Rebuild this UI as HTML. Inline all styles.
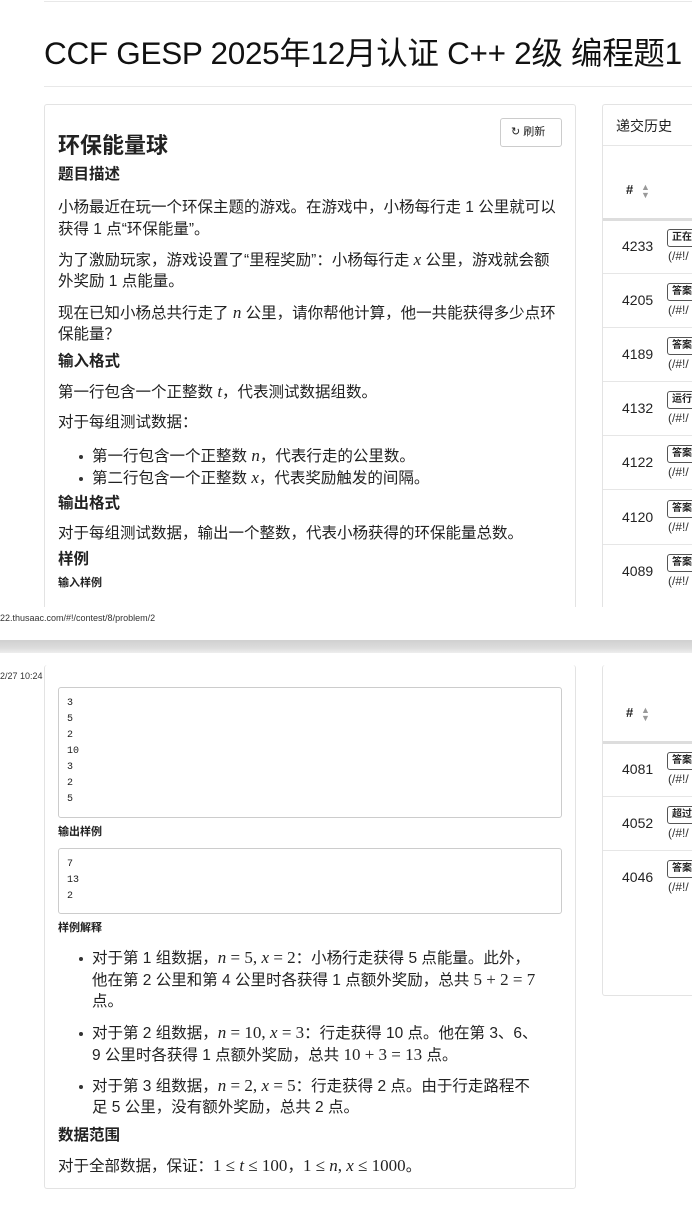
<!DOCTYPE html>
<html><head><meta charset="utf-8"><style>
*{margin:0;padding:0;box-sizing:border-box}
body{width:692px;height:1205px;position:relative;overflow:hidden;background:#fff;font-family:"Liberation Sans","Noto Sans CJK SC",sans-serif;color:#222}
.a{position:absolute;white-space:nowrap}
.t{font-size:15.5px;line-height:22px;height:22px}
.h{font-size:15.5px;font-weight:bold;line-height:22px}
i.m{font-family:"Liberation Serif",serif;font-style:italic;font-size:17px}
.r{font-family:"Liberation Serif",serif;font-size:17px}
.card{position:absolute;border:1px solid #e3e3e3;border-radius:3px;background:#fff}
.pre{position:absolute;border:1px solid #ccc;border-radius:3px;background:#fff;font-family:"Liberation Mono",monospace;font-size:10px;line-height:16px;padding:8px 0 0 8px}
.num{position:absolute;left:622px;font-size:14px;line-height:20px}
.bd{position:absolute;left:667px;width:40px;height:18px;border:1px solid #555;border-radius:3px;font-size:10px;font-weight:bold;line-height:16px;padding-left:4px;overflow:hidden;white-space:nowrap}
.ln{position:absolute;left:668px;font-size:12px;line-height:14px;color:#333}
.hr{position:absolute;left:603px;right:0;height:1px;background:#e6e6e6}
.dot{position:absolute;width:4px;height:4px;border-radius:2px;background:#333}
</style></head><body>
<div class="a" style="right:0;top:1px;height:1px;background:#e8e8e8;left:44px"></div>
<div class="a" style="left:44px;top:32px;font-size:31.5px;line-height:42px;letter-spacing:-0.3px;color:#111">CCF GESP 2025年12月认证 C++ 2级 编程题1</div>
<div class="a" style="left:44px;right:0;top:86px;height:1px;background:#e8e8e8"></div>

<div class="card" style="left:44px;top:104px;width:532px;height:540px;border-bottom:none"></div>
<div class="card" style="left:602px;top:104px;width:120px;height:540px;border-bottom:none"></div>
<div class="a" style="left:500px;top:118px;width:62px;height:29px;border:1px solid #ccc;border-radius:3px;font-size:11px;line-height:27px;padding-left:10px">&#x21bb; 刷新</div>
<div class="a" style="left:58px;top:132px;font-size:22px;font-weight:bold;line-height:28px">环保能量球</div>
<div class="a h" style="left:58px;top:164px">题目描述</div>
<div class="a t" style="left:58px;top:197px">小杨最近在玩一个环保主题的游戏。在游戏中，小杨每行走 1 公里就可以</div>
<div class="a t" style="left:58px;top:219px">获得 1 点“环保能量”。</div>
<div class="a t" style="left:58px;top:249px">为了激励玩家，游戏设置了“里程奖励”：小杨每行走 <i class="m">x</i> 公里，游戏就会额</div>
<div class="a t" style="left:58px;top:271px">外奖励 1 点能量。</div>
<div class="a t" style="left:58px;top:302px">现在已知小杨总共行走了 <i class="m">n</i> 公里，请你帮他计算，他一共能获得多少点环</div>
<div class="a t" style="left:58px;top:324px">保能量？</div>
<div class="a h" style="left:58px;top:351px">输入格式</div>
<div class="a t" style="left:58px;top:381px">第一行包含一个正整数 <i class="m">t</i>，代表测试数据组数。</div>
<div class="a t" style="left:58px;top:412px">对于每组测试数据：</div>
<div class="dot" style="left:79px;top:455px"></div>
<div class="a t" style="left:92px;top:445px">第一行包含一个正整数 <i class="m">n</i>，代表行走的公里数。</div>
<div class="dot" style="left:79px;top:477px"></div>
<div class="a t" style="left:92px;top:467px">第二行包含一个正整数 <i class="m">x</i>，代表奖励触发的间隔。</div>
<div class="a h" style="left:58px;top:493px">输出格式</div>
<div class="a t" style="left:58px;top:523px">对于每组测试数据，输出一个整数，代表小杨获得的环保能量总数。</div>
<div class="a h" style="left:58px;top:549px">样例</div>
<div class="a" style="left:58px;top:576px;font-size:11px;font-weight:bold;line-height:14px">输入样例</div>

<div class="a" style="left:616px;top:115px;font-size:14px;line-height:22px">递交历史</div>
<div class="hr" style="top:145px"></div>
<div class="a" style="left:626px;top:181px;font-size:13px;font-weight:bold;line-height:18px">#</div>
<div class="a" style="left:641px;top:183px;font-size:9px;line-height:8px;color:#999">▲<br>▼</div>
<div class="hr" style="top:218px;height:3px;background:#ddd"></div>

<div class="num" style="top:236px">4233</div><div class="bd" style="top:229px">正在</div><div class="ln" style="top:249px">(/#!/</div><div class="hr" style="top:273px"></div>
<div class="num" style="top:290px">4205</div><div class="bd" style="top:283px">答案</div><div class="ln" style="top:303px">(/#!/</div><div class="hr" style="top:327px"></div>
<div class="num" style="top:344px">4189</div><div class="bd" style="top:337px">答案</div><div class="ln" style="top:357px">(/#!/</div><div class="hr" style="top:381px"></div>
<div class="num" style="top:398px">4132</div><div class="bd" style="top:391px">运行</div><div class="ln" style="top:411px">(/#!/</div><div class="hr" style="top:435px"></div>
<div class="num" style="top:452px">4122</div><div class="bd" style="top:445px">答案</div><div class="ln" style="top:465px">(/#!/</div><div class="hr" style="top:489px"></div>
<div class="num" style="top:507px">4120</div><div class="bd" style="top:500px">答案</div><div class="ln" style="top:520px">(/#!/</div><div class="hr" style="top:544px"></div>
<div class="num" style="top:561px">4089</div><div class="bd" style="top:554px">答案</div><div class="ln" style="top:574px">(/#!/</div>

<div class="a" style="left:0;right:0;top:607px;height:35px;background:#fff"></div>
<div class="a" style="left:0;top:613px;font-size:9px;line-height:11px;color:#333">22.thusaac.com/#!/contest/8/problem/2</div>
<div class="a" style="left:0;right:0;top:640px;height:13px;background:linear-gradient(#d0d0d0,#dcdcdc 60%,#eee)"></div>
<div class="a" style="left:0;top:671px;font-size:9px;line-height:11px;color:#333">2/27 10:24</div>
<div class="a" style="left:468px;top:673px;font-size:9px;line-height:11px;color:#333">TUOJ - 查看题目</div>

<div class="card" style="left:44px;top:665px;width:532px;height:524px;border-top:none"></div>
<div class="card" style="left:602px;top:665px;width:120px;height:331px;border-top:none"></div>
<div class="pre" style="left:58px;top:687px;width:504px;height:131px">3<br>5<br>2<br>10<br>3<br>2<br>5</div>
<div class="a" style="left:58px;top:825px;font-size:11px;font-weight:bold;line-height:14px">输出样例</div>
<div class="pre" style="left:58px;top:848px;width:504px;height:66px">7<br>13<br>2</div>
<div class="a" style="left:58px;top:921px;font-size:11px;font-weight:bold;line-height:14px">样例解释</div>
<div class="dot" style="left:79px;top:957px"></div>
<div class="a t" style="left:92px;top:947px">对于第 1 组数据，<i class="m">n</i> <span class="r">= 5,</span> <i class="m">x</i> <span class="r">= 2</span>：小杨行走获得 5 点能量。此外，</div>
<div class="a t" style="left:92px;top:969px">他在第 2 公里和第 4 公里时各获得 1 点额外奖励，总共 <span class="r">5 + 2 = 7</span></div>
<div class="a t" style="left:92px;top:991px">点。</div>
<div class="dot" style="left:79px;top:1032px"></div>
<div class="a t" style="left:92px;top:1022px">对于第 2 组数据，<i class="m">n</i> <span class="r">= 10,</span> <i class="m">x</i> <span class="r">= 3</span>：行走获得 10 点。他在第 3、6、</div>
<div class="a t" style="left:92px;top:1044px">9 公里时各获得 1 点额外奖励，总共 <span class="r">10 + 3 = 13</span> 点。</div>
<div class="dot" style="left:79px;top:1085px"></div>
<div class="a t" style="left:92px;top:1075px">对于第 3 组数据，<i class="m">n</i> <span class="r">= 2,</span> <i class="m">x</i> <span class="r">= 5</span>：行走获得 2 点。由于行走路程不</div>
<div class="a t" style="left:92px;top:1097px">足 5 公里，没有额外奖励，总共 2 点。</div>
<div class="a h" style="left:58px;top:1125px">数据范围</div>
<div class="a t" style="left:58px;top:1155px">对于全部数据，保证：<span class="r">1 ≤ </span><i class="m">t</i><span class="r"> ≤ 100</span>，<span class="r">1 ≤ </span><i class="m">n</i><span class="r">, </span><i class="m">x</i><span class="r"> ≤ 1000</span>。</div>

<div class="a" style="left:626px;top:704px;font-size:13px;font-weight:bold;line-height:18px">#</div>
<div class="a" style="left:641px;top:706px;font-size:9px;line-height:8px;color:#999">▲<br>▼</div>
<div class="hr" style="top:741px;height:3px;background:#ddd"></div>
<div class="num" style="top:759px">4081</div><div class="bd" style="top:752px">答案</div><div class="ln" style="top:772px">(/#!/</div><div class="hr" style="top:796px"></div>
<div class="num" style="top:813px">4052</div><div class="bd" style="top:806px">超过</div><div class="ln" style="top:826px">(/#!/</div><div class="hr" style="top:850px"></div>
<div class="num" style="top:867px">4046</div><div class="bd" style="top:860px">答案</div><div class="ln" style="top:880px">(/#!/</div>
</body></html>
